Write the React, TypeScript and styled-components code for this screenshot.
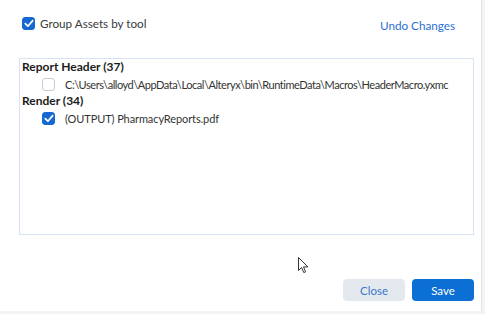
import React, { useState } from 'react';
import styled, { createGlobalStyle } from 'styled-components';

const GlobalStyle = createGlobalStyle`
  html, body {
    margin: 0;
    padding: 0;
    background: #e6e8ec;
    font-family: Lato, "Noto Sans", Arial, sans-serif;
  }
`;

const Page = styled.div`
  width: 485px;
  height: 314px;
  display: flex;
  background: #f3f4f6;
  position: relative;
  overflow: hidden;
`;

const Dialog = styled.div`
  width: 482px;
  height: 311px;
  background: #ffffff;
  border-right: 1px solid #dfe2e7;
  box-sizing: border-box;
  padding: 15px 7px 0 19px;
  display: flex;
  flex-direction: column;
`;

const TopRow = styled.div`
  display: flex;
  align-items: center;
  justify-content: space-between;
  height: 16px;
  padding-left: 3px;
`;

const CheckLabel = styled.label`
  display: flex;
  align-items: center;
  gap: 5px;
  font-size: 11.7px;
  color: #3a3a3a;
  cursor: pointer;
`;

const Box = styled.span<{ checked: boolean }>`
  width: 13px;
  height: 13px;
  box-sizing: border-box;
  border-radius: 3px;
  border: 1px solid ${p => (p.checked ? '#1769d2' : '#c3cddd')};
  background: ${p => (p.checked ? '#1769d2' : '#ffffff')};
  display: flex;
  align-items: center;
  justify-content: center;
  flex-shrink: 0;
`;

const LinkButton = styled.button`
  border: none;
  background: none;
  padding: 0;
  margin-right: 19px;
  margin-top: 3px;
  font-family: inherit;
  font-size: 11.7px;
  color: #2a6fd0;
  cursor: pointer;
`;

const ListBox = styled.div`
  margin-top: 27px;
  height: 177px;
  box-sizing: border-box;
  border: 1px solid #d6e1f3;
  padding: 0 2px;
  display: flex;
  flex-direction: column;
`;

const GroupTitle = styled.div`
  font-size: 12px;
  font-weight: 700;
  color: #1b1b1b;
  height: 16px;
  line-height: 16px;
`;

const Item = styled.div<{ tight?: boolean }>`
  display: flex;
  align-items: center;
  gap: 10px;
  padding-left: 20px;
  height: 18px;
  font-size: 11px;
  letter-spacing: ${p => (p.tight ? '-0.45px' : '-0.1px')};
  color: #333333;
  white-space: nowrap;
`;

const Footer = styled.div`
  margin-top: auto;
  margin-bottom: 10px;
  display: flex;
  justify-content: flex-end;
  gap: 7px;
`;

const Button = styled.button<{ primary?: boolean }>`
  width: 62px;
  height: 22px;
  border: none;
  border-radius: 4px;
  font-family: inherit;
  font-size: 11.5px;
  background: ${p => (p.primary ? '#0c6fd4' : '#e4e9f0')};
  color: ${p => (p.primary ? '#ffffff' : '#3a78c8')};
  cursor: pointer;
`;

const Cursor = styled.svg`
  position: absolute;
  left: 298px;
  top: 257px;
`;

const Check = () => (
  <svg width="10" height="9" viewBox="0 0 10 9">
    <path d="M1.3 4.6 L3.9 7.2 L8.7 1.6" fill="none" stroke="#fff" strokeWidth="1.7" strokeLinecap="round" strokeLinejoin="round" />
  </svg>
);

const CheckBox: React.FC<{ checked: boolean }> = ({ checked }) => (
  <Box checked={checked}>{checked && <Check />}</Box>
);

export default function App() {
  const [grouped, setGrouped] = useState(true);

  return (
    <Page>
      <GlobalStyle />
      <Dialog>
        <TopRow>
          <CheckLabel onClick={() => setGrouped(!grouped)}>
            <CheckBox checked={grouped} />
            Group Assets by tool
          </CheckLabel>
          <LinkButton>Undo Changes</LinkButton>
        </TopRow>
        <ListBox>
          <GroupTitle>Report Header (37)</GroupTitle>
          <Item tight>
            <CheckBox checked={false} />
            C:\Users\alloyd\AppData\Local\Alteryx\bin\RuntimeData\Macros\HeaderMacro.yxmc
          </Item>
          <GroupTitle>Render (34)</GroupTitle>
          <Item>
            <CheckBox checked={true} />
            (OUTPUT) PharmacyReports.pdf
          </Item>
        </ListBox>
        <Footer>
          <Button>Close</Button>
          <Button primary>Save</Button>
        </Footer>
      </Dialog>
      <Cursor width="12" height="18" viewBox="0 0 12 18">
        <path d="M0.5 0.5 L0.5 13.5 L3.6 10.6 L5.8 15.6 L7.6 14.8 L5.5 9.9 L9.9 9.9 Z" fill="#fff" stroke="#333" strokeWidth="1" strokeLinejoin="round" />
      </Cursor>
    </Page>
  );
}
